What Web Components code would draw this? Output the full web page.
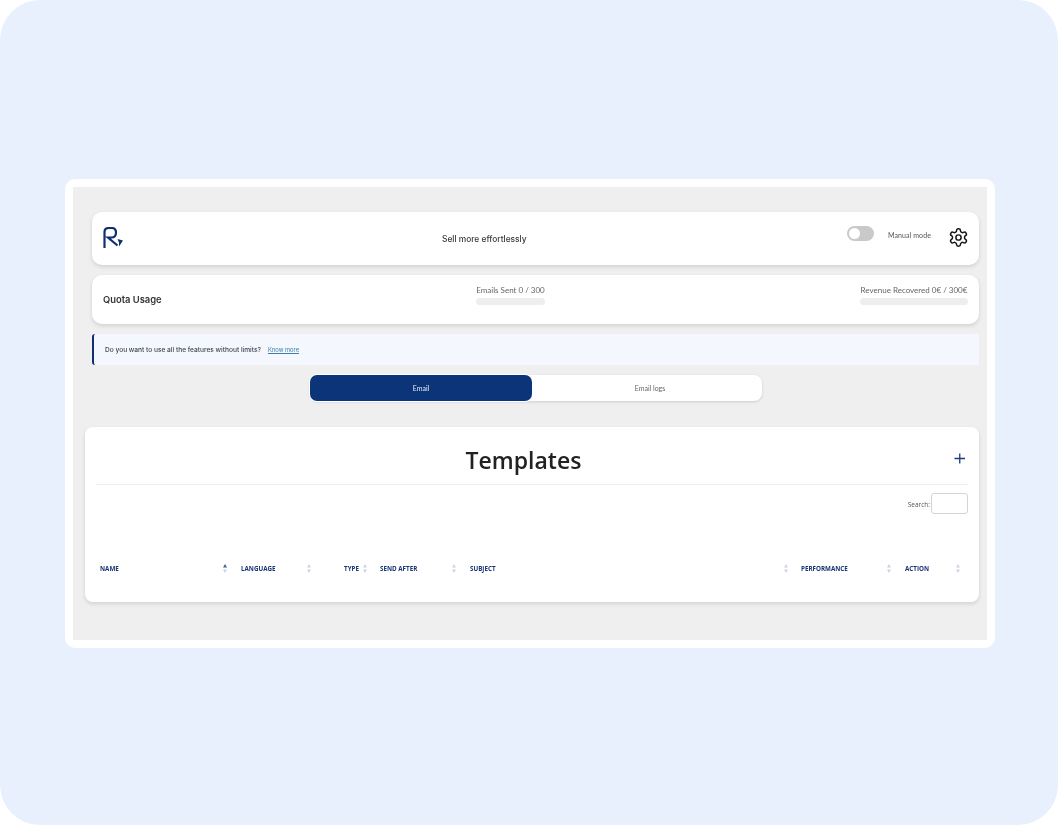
<!DOCTYPE html>
<html><head><meta charset="utf-8"><title>Templates</title>
<style>
html,body{margin:0;padding:0;background:#fff}
body{font-family:"Inter","Liberation Sans",sans-serif}
</style></head><body>
<app-stage>
  <top-bar></top-bar>
  <quota-card>
    <quota-meter label="Emails Sent 0 / 300" style="width:69px;margin-left:315px"></quota-meter>
    <quota-meter label="Revenue Recovered 0€ / 300€" style="width:108px;margin-left:auto"></quota-meter>
  </quota-card>
  <promo-alert></promo-alert>
  <tab-switch></tab-switch>
  <templates-card></templates-card>
</app-stage>
<script>
function def(name, css, html){
  customElements.define(name, class extends HTMLElement{
    connectedCallback(){
      if(this.shadowRoot) return;
      const r=this.attachShadow({mode:'open'});
      r.innerHTML='<style>'+css+'</style>'+(typeof html==='function'?html(this):html);
    }
  });
}
def('app-stage',`
 :host{display:block;width:1058px;height:825px;box-sizing:border-box;overflow:hidden}
 .bg{box-sizing:border-box;height:825px;background:#e8f0fe;border-radius:40px;padding:179px 63px 177px 65px}
 .frame{box-sizing:border-box;height:469px;background:#fff;border-radius:10px;padding:8px}
 .gray{box-sizing:border-box;height:453px;background:#efefef;padding:25px 8px 0 12px;display:flex;flex-direction:column;filter:blur(.35px)}
`,`<div class="bg"><div class="frame"><div class="gray"><slot></slot></div></div></div>`);

def('top-bar',`
 :host{display:flex;align-items:center;height:53px;margin:0 0 10px 7px;background:#fff;border-radius:10px;box-shadow:0 2px 4px rgba(0,0,0,.12);padding:0 10px 0 11px;box-sizing:border-box;position:relative}
 .logo{width:20px;height:21px;margin-top:-3px;flex:none}
 .tag{margin:0 0 0 319px;font:500 8.400px "Inter",sans-serif;color:#3a3a3a;white-space:nowrap}
 .right{margin-left:auto;display:flex;align-items:center}
 .sw{width:27px;height:15px;border-radius:8px;background:#c9c9c9;position:relative;margin-top:-10px;flex:none}
 .sw::after{content:"";position:absolute;left:2px;top:2px;width:11px;height:11px;border-radius:50%;background:#fff}
 .mm{font:400 7px "Lato","Inter",sans-serif;letter-spacing:.1px;color:#555;margin:-7px 0 0 14px;white-space:nowrap}
 svg.gear{width:21px;height:21px;margin:-3px 0 0 17px;flex:none}
`,`<svg class="logo" viewBox="0 0 20 21" fill="none" stroke="#0f2f72" stroke-width="2.200"><path d="M1.500 21V5Q1.500 1 6 1H8.500Q13 1 13 5.500Q13 10.500 8.500 10.500H5L14.500 18.500"/><path fill="#0f2f72" stroke="none" d="M14.500 12L20 13.600L16 19.500L16 15.500Z"/></svg>
 <span class="tag">Sell more effortlessly</span>
 <span class="right"><span class="sw"></span><span class="mm">Manual mode</span>
 <svg class="gear" viewBox="0 0 24 24" fill="none" stroke="#161616" stroke-width="1.700" stroke-linejoin="round"><path d="M12.220 2h-.44a2 2 0 0 0-2 2v.18a2 2 0 0 1-1 1.730l-.43.25a2 2 0 0 1-2 0l-.15-.08a2 2 0 0 0-2.730.73l-.22.38a2 2 0 0 0 .73 2.730l.15.1a2 2 0 0 1 1 1.720v.51a2 2 0 0 1-1 1.740l-.15.09a2 2 0 0 0-.73 2.730l.22.38a2 2 0 0 0 2.730.73l.15-.08a2 2 0 0 1 2 0l.43.25a2 2 0 0 1 1 1.730V20a2 2 0 0 0 2 2h.44a2 2 0 0 0 2-2v-.18a2 2 0 0 1 1-1.730l.43-.25a2 2 0 0 1 2 0l.15.08a2 2 0 0 0 2.730-.73l.22-.39a2 2 0 0 0-.73-2.730l-.15-.08a2 2 0 0 1-1-1.740v-.5a2 2 0 0 1 1-1.740l.15-.09a2 2 0 0 0 .73-2.730l-.22-.38a2 2 0 0 0-2.730-.73l-.15.08a2 2 0 0 1-2 0l-.43-.25a2 2 0 0 1-1-1.730V4a2 2 0 0 0-2-2z"/><circle cx="12" cy="12" r="3"/></svg></span>`);

def('quota-card',`
 :host{display:flex;align-items:flex-start;height:49px;margin:0 0 10px 7px;background:#fff;border-radius:10px;box-shadow:0 2px 4px rgba(0,0,0,.12);padding:0 11px;box-sizing:border-box}
 .t{font:600 9.400px/12px "Inter",sans-serif;color:#333;margin-top:19px;width:58px;white-space:nowrap;flex:none}
`,`<span class="t">Quota Usage</span><slot></slot>`);

def('quota-meter',`
 :host{display:flex;flex-direction:column;margin-top:10px;flex:none}
 .l{font:400 8px/11px "Lato","Inter",sans-serif;color:#666;white-space:nowrap;text-align:center}
 .b{height:7px;border-radius:4px;background:#eee;margin-top:2px}
`,h=>`<span class="l">${h.getAttribute('label')}</span><span class="b"></span>`);

def('promo-alert',`
 :host{display:flex;align-items:center;height:31px;margin:0 0 10px 7px;background:#f4f7fe;border-left:2px solid #0f2f72;border-radius:3px 0 0 3px;padding:0 0 0 11px;box-sizing:border-box}
 .q{font:500 6.600px "Inter",sans-serif;color:#3f4450;white-space:nowrap}
 a{font:400 5.800px "Inter",sans-serif;color:#3d7ea6;text-decoration:underline;margin-left:7px;white-space:nowrap}
`,`<span class="q">Do you want to use all the features without limits?</span><a href="#">Know more</a>`);

def('tab-switch',`
 :host{display:flex;width:452px;height:26px;margin:0 0 26px 225px;background:#fff;border-radius:8px;box-shadow:0 1px 3px rgba(0,0,0,.14)}
 span{display:flex;align-items:center;justify-content:center;font:400 7px "Lato","Inter",sans-serif;color:#666}
 .a{width:222px;background:#0b3479;color:#e8eefb;border-radius:7px;box-shadow:0 0 0 1px #fff}
 .b{flex:1;padding-left:6px}
`,`<span class="a">Email</span><span class="b">Email logs</span>`);

def('sort-head',`
 :host{display:flex;align-items:center;justify-content:space-between;font:700 6.250px "Open Sans","Liberation Sans",sans-serif;color:#183472;white-space:nowrap}
 svg{width:4px;height:9px;flex:none}
`,h=>{const up=h.hasAttribute('active')?'#3b5ea8':'#c9d2e3';return `<slot></slot><svg viewBox="0 0 4 9"><path d="M2 0L4 3.500H0z" fill="${up}"/><path d="M2 9L0 5.500H4z" fill="#c9d2e3"/></svg>`});

def('templates-card',`
 :host{display:block;height:175px;background:#fff;border-radius:8px;box-shadow:0 2px 4px rgba(0,0,0,.12);padding:0 11px;box-sizing:border-box}
 .head{display:flex;align-items:center;height:58px;border-bottom:1px solid #ececec;box-sizing:border-box}
 h1{flex:1;margin:0;text-align:center;font:600 23px "Open Sans",sans-serif;color:#222;padding-top:8px}
 .plus{width:17px;height:17px;flex:none;margin-top:6px}
 .search{display:flex;justify-content:flex-end;align-items:center;margin-top:8px;height:21px}
 label{font:400 6.500px "Open Sans",sans-serif;color:#555;margin:2px 1px 0 0}
 input{box-sizing:border-box;width:37px;height:21px;border:1px solid #d4d4d4;border-radius:3px;background:#fff;padding:0;margin:0}
 .row{display:grid;grid-template-columns:141px 70px 69px 90px 331px 104px 58px;height:20px;margin:44px 0 0 4px}
`,`<div class="head"><h1>Templates</h1><svg class="plus" viewBox="0 0 17 17" stroke="#1d3a78" stroke-width="1.300"><path d="M3.500 8.500H14M8.750 3.500V13.500"/></svg></div>
 <div class="search"><label>Search:</label><input type="text"></div>
 <div class="row">
  <sort-head active style="padding-right:14px">NAME</sort-head>
  <sort-head>LANGUAGE</sort-head>
  <sort-head style="justify-content:flex-end;gap:4px;padding-right:13px">TYPE</sort-head>
  <sort-head style="padding-right:14px">SEND AFTER</sort-head>
  <sort-head style="padding-right:13px">SUBJECT</sort-head>
  <sort-head style="padding-right:14px">PERFORMANCE</sort-head>
  <sort-head style="padding-right:3px">ACTION</sort-head>
 </div>`);
</script>
</body></html>
